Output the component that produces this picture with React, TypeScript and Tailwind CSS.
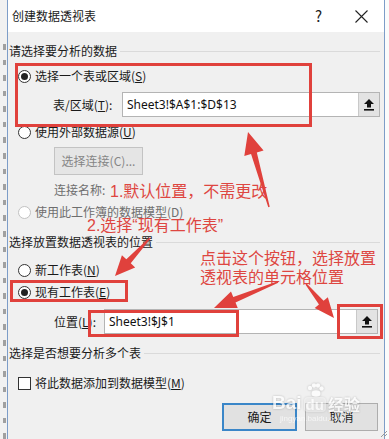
import React from "react"

const UI_FONT = { fontFamily: '"Noto Sans CJK SC", "Noto Sans", sans-serif' }
const NOTE_FONT = { fontFamily: '"Liberation Sans", "Noto Sans CJK SC", sans-serif' }
const INPUT_FONT = { fontFamily: '"Noto Sans", "Noto Sans CJK SC", sans-serif' }

// tapered arrow: thin tail, wide head
const arrowPoints = (tx: number, ty: number, px: number, py: number, headLen = 20, headW = 18, w0 = 1.5, w1 = 6) => {
  const dx = px - tx
  const dy = py - ty
  const len = Math.hypot(dx, dy)
  const ux = dx / len
  const uy = dy / len
  const nx = -uy
  const ny = ux
  const neckX = px - ux * headLen
  const neckY = py - uy * headLen
  const pts = [
    [tx + (nx * w0) / 2, ty + (ny * w0) / 2],
    [neckX + (nx * w1) / 2, neckY + (ny * w1) / 2],
    [neckX + (nx * headW) / 2, neckY + (ny * headW) / 2],
    [px, py],
    [neckX - (nx * headW) / 2, neckY - (ny * headW) / 2],
    [neckX - (nx * w1) / 2, neckY - (ny * w1) / 2],
    [tx - (nx * w0) / 2, ty - (ny * w0) / 2],
  ]
  return pts.map(p => p.join(",")).join(" ")
}

const Radio = ({ checked = false, disabled = false }) => (
  <span
    className={`w-[13px] h-[13px] rounded-full border bg-white flex items-center justify-center shrink-0 ${
      disabled ? "border-[#c2c2c2]" : "border-[#333333]"
    }`}
  >
    {checked && <span className="w-[7px] h-[7px] rounded-full bg-[#222222]" />}
  </span>
)

const Section = ({ text, className = "" }: { text: string; className?: string }) => (
  <div className={`h-5 flex items-center gap-[3px] pl-px pr-1 ${className}`}>
    <span className="whitespace-nowrap">{text}</span>
    <div className="flex-1 h-px bg-[#dadada]" />
  </div>
)

const UpIcon = () => (
  <svg width="10" height="12" viewBox="0 0 10 12">
    <path d="M5 0 L10 5 H7 V8.5 H3 V5 H0 Z" fill="#111" />
    <rect x="0" y="10" width="10" height="1.6" fill="#111" />
  </svg>
)

const RangeInput = ({ value, className = "" }: { value: string; className?: string }) => (
  <div className={`flex border border-[#b4b4b4] bg-white ${className}`}>
    <div className="flex-1 flex items-center pl-[4px] text-[12px] text-[#111]" style={INPUT_FONT}>
      {value}
    </div>
    <div className="w-[21px] bg-[#e3e3e3] border-l border-[#c9c9c9] flex items-center justify-center">
      <UpIcon />
    </div>
  </div>
)

export default function App() {
  const sheetRows = Array.from({ length: 26 }, (_, i) => i)

  return (
    <div className="relative w-[389px] h-[439px] overflow-hidden flex bg-white text-[12px] leading-[14px] text-[#1a1a1a]" style={UI_FONT}>
      {/* sliver of the sheet behind the dialog: only the ends of the row numbers show */}
      <div className="w-[7px] bg-[#f1f1f1] flex flex-col items-end gap-[10px] pt-[44px] pr-[1px]">
        {sheetRows.map(r => (
          <div key={r} className="w-[3px] h-[7px] bg-[#6a6a6a] opacity-60" />
        ))}
      </div>

      <div className="w-[378px] flex flex-col border-x border-[#7d9dc8] bg-[#f0f0f0]">
        <div className="h-[32px] shrink-0 bg-white flex items-center pl-[4px]">
          <span>创建数据透视表</span>
          <span className="ml-auto text-[15px] text-[#222]">?</span>
          <svg className="ml-[33px] mr-[16px]" width="13" height="13" viewBox="0 0 13 13">
            <path d="M0.5 0.5 L12.5 12.5 M12.5 0.5 L0.5 12.5" stroke="#222" strokeWidth="1.1" />
          </svg>
        </div>

        <Section text="请选择要分析的数据" className="mt-[9px]" />

        <div className="mt-[5px] h-5 flex items-center gap-[4px] pl-[10px]">
          <Radio checked />
          <span>
            选择一个表或区域(<span className="underline">S</span>)
          </span>
        </div>

        <div className="mt-[6px] h-[25px] flex items-center pl-[45px] pr-[4px]">
          <span className="w-[69px] whitespace-nowrap">
            表/区域(<span className="underline">T</span>):
          </span>
          <RangeInput value="Sheet3!$A$1:$D$13" className="flex-1 h-[25px]" />
        </div>

        <div className="mt-[5px] h-5 flex items-center gap-[4px] pl-[10px]">
          <Radio />
          <span>
            使用外部数据源(<span className="underline">U</span>)
          </span>
        </div>

        <div className="mt-[5px] h-[28px] flex pl-[46px]">
          <div className="w-[89px] h-[28px] bg-[#e5e5e5] border border-[#c3c3c3] flex items-center justify-center text-[#858585]">
            选择连接(C)...
          </div>
        </div>

        <div className="mt-[5px] h-5 flex items-center pl-[46px] text-[#6e6e6e]">连接名称:</div>

        <div className="mt-[2px] h-5 flex items-center gap-[4px] pl-[10px] text-[#6e6e6e]">
          <Radio disabled />
          <span>使用此工作簿的数据模型(D)</span>
        </div>

        <Section text="选择放置数据透视表的位置" className="mt-[10px]" />

        <div className="mt-[8px] h-5 flex items-center gap-[4px] pl-[10px]">
          <Radio />
          <span>
            新工作表(<span className="underline">N</span>)
          </span>
        </div>

        <div className="mt-[2px] h-5 flex items-center gap-[4px] pl-[10px]">
          <Radio checked />
          <span>
            现有工作表(<span className="underline">E</span>)
          </span>
        </div>

        <div className="mt-[7px] h-[25px] flex items-center pl-[46px] pr-[6px]">
          <span className="w-[50px] whitespace-nowrap">
            位置(<span className="underline">L</span>):
          </span>
          <RangeInput value="Sheet3!$J$1" className="flex-1 h-[25px]" />
        </div>

        <Section text="选择是否想要分析多个表" className="mt-[9px]" />

        <div className="mt-[10px] h-5 flex items-center gap-[4px] pl-[10px]">
          <span className="w-[13px] h-[13px] border border-[#333333] bg-white shrink-0" />
          <span>
            将此数据添加到数据模型(<span className="underline">M</span>)
          </span>
        </div>

        <div className="mt-[10px] h-[28px] flex justify-end gap-[8px] pr-[6px]">
          <div className="w-[75px] h-[28px] bg-[#e1e1e1] border-2 border-[#3a86c8] flex items-center justify-center">确定</div>
          <div className="w-[73px] h-[28px] bg-[#e1e1e1] border border-[#adadad] flex items-center justify-center">取消</div>
        </div>
      </div>

      <div className="w-[4px] bg-[#fbfbfb]" />

      {/* faint site watermark over the buttons */}
      <div className="absolute left-[272px] top-[383px] flex flex-col items-start pointer-events-none opacity-75">
        <div className="flex items-end gap-[2px] text-white font-bold text-[19px] leading-none drop-shadow-[0_0_1px_rgba(0,0,0,0.3)]" style={NOTE_FONT}>
          <span>Bai</span>
          <span className="flex flex-col items-center">
            <svg width="18" height="14" viewBox="0 0 18 14">
              <circle cx="4" cy="5" r="2.2" fill="#fff" />
              <circle cx="8" cy="2.5" r="2.2" fill="#fff" />
              <circle cx="12" cy="2.5" r="2.2" fill="#fff" />
              <circle cx="15.5" cy="5.5" r="2.2" fill="#fff" />
              <ellipse cx="10" cy="10.5" rx="4.5" ry="3.2" fill="#fff" />
            </svg>
            <span className="px-[2px] rounded-sm bg-white/60 text-[15px]">du</span>
          </span>
          <span className="text-[16px]" style={UI_FONT}>经验</span>
        </div>
        <span className="text-[8px] text-white/90 ml-[8px]" style={NOTE_FONT}>jingyan.baidu.com</span>
      </div>

      {/* annotation overlay */}
      <div className="absolute left-[15px] top-[63px] w-[297px] h-[64px] border-[3px] border-[#e0413c] pointer-events-none" />
      <div className="absolute left-[10px] top-[280px] w-[118px] h-[22px] border-[3px] border-[#e0413c] pointer-events-none" />
      <div className="absolute left-[88px] top-[310px] w-[151px] h-[27px] border-[3px] border-[#e0413c] pointer-events-none" />
      <div className="absolute left-[337px] top-[304px] w-[46px] h-[35px] border-[3px] border-[#e0413c] pointer-events-none" />

      <div className="absolute left-[110px] top-[184px] text-[16px] leading-[16px] text-[#de4641] whitespace-nowrap" style={NOTE_FONT}>
        1.默认位置，不需更改
      </div>
      <div className="absolute left-[87px] top-[218px] text-[16px] leading-[16px] text-[#de4641] whitespace-nowrap" style={NOTE_FONT}>
        2.选择“现有工作表”
      </div>
      <div className="absolute left-[200px] top-[249px] text-[16px] leading-[19px] text-[#de4641] whitespace-nowrap" style={NOTE_FONT}>
        <div>点击这个按钮，选择放置</div>
        <div>透视表的单元格位置</div>
      </div>

      <svg className="absolute inset-0 pointer-events-none" width="389" height="439">
        <polygon points={arrowPoints(269, 207, 248, 132, 22, 20, 1.5, 6)} fill="#e0413c" />
        <polygon points={arrowPoints(150, 238, 115, 276, 20, 18, 1.5, 6)} fill="#e0413c" />
        <polygon points={arrowPoints(278, 282, 214, 308, 22, 18, 1.5, 6)} fill="#e0413c" />
        <polygon points={arrowPoints(306, 284, 334, 318, 20, 17, 1.5, 6)} fill="#e0413c" />
        <path d="M381 437 L387 431 M384 437 L387 434" stroke="#9a9a9a" strokeWidth="1" />
      </svg>
    </div>
  )
}
